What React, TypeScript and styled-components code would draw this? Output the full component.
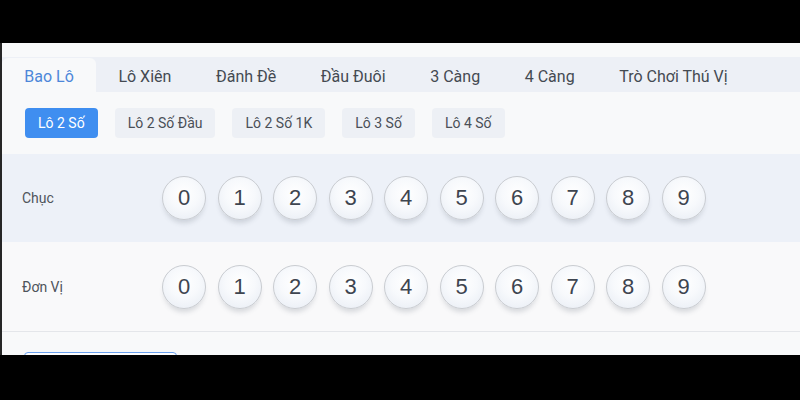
import React, { useState } from "react";
import styled, { createGlobalStyle } from "styled-components";

const GlobalStyle = createGlobalStyle`
  html, body {
    margin: 0;
    background: #000;
  }
  body {
    font-family: Roboto, "Noto Sans", Arial, sans-serif;
  }
`;

const Frame = styled.div`
  width: 800px;
  height: 400px;
  padding-top: 43px;
  box-sizing: border-box;
  background: #000;
`;

const Panel = styled.div`
  height: 312px;
  background: #f8f9fa;
  border-left: 2px solid #262626;
  padding-top: 14px;
  box-sizing: border-box;
  overflow: hidden;
`;

const TabBar = styled.div`
  display: flex;
  height: 35px;
  background: #edf0f6;
`;

const Tab = styled.div<{ $active?: boolean }>`
  display: flex;
  align-items: center;
  padding: 2px 22.3px 0;
  font-size: 16px;
  color: ${(p) => (p.$active ? "#4d87d9" : "#444a52")};
  background: ${(p) => (p.$active ? "#f8f9fa" : "transparent")};
  border-radius: 6px 6px 0 0;
  margin-top: 1px;
  cursor: pointer;
`;

const SubRow = styled.div`
  display: flex;
  gap: 17px;
  padding: 16px 0 16px 23px;
`;

const SubButton = styled.div<{ $active?: boolean }>`
  height: 30px;
  display: flex;
  align-items: center;
  padding: 0 13px;
  border-radius: 4px;
  font-size: 14px;
  color: ${(p) => (p.$active ? "#fff" : "#4a4f57")};
  background: ${(p) => (p.$active ? "#3f8ef0" : "#edf0f5")};
  cursor: pointer;
`;

const PickRow = styled.div<{ $shaded?: boolean }>`
  display: flex;
  align-items: center;
  height: ${(p) => (p.$shaded ? "88px" : "89px")};
  padding-left: 20px;
  background: ${(p) => (p.$shaded ? "#edf1f8" : "#f9f9fa")};
  border-bottom: ${(p) => (p.$shaded ? "none" : "1px solid #e4e6ea")};
`;

const RowLabel = styled.div`
  width: 140px;
  font-size: 14px;
  color: #4f545b;
`;

const Balls = styled.div`
  display: flex;
  gap: 11.5px;
`;

const Ball = styled.div`
  width: 42px;
  height: 42px;
  border-radius: 50%;
  border: 1px solid #c9ccd1;
  background: radial-gradient(circle at 50% 40%, #ffffff 0%, #f7f9fc 45%, #e6ebf3 100%);
  box-shadow: 0 5px 5px -2px rgba(60, 70, 90, 0.18);
  display: flex;
  align-items: center;
  justify-content: center;
  font-family: "Liberation Sans", Arial, sans-serif;
  font-size: 22px;
  color: #3e4550;
  cursor: pointer;
`;

const Footer = styled.div`
  padding: 20px 0 0 22px;
`;

const OutlineButton = styled.div`
  width: 151px;
  height: 36px;
  border: 1px solid #6aa0ee;
  border-radius: 4px;
  background: #fff;
`;

const tabs = ["Bao Lô", "Lô Xiên", "Đánh Đề", "Đầu Đuôi", "3 Càng", "4 Càng", "Trò Chơi Thú Vị"];
const subTabs = ["Lô 2 Số", "Lô 2 Số Đầu", "Lô 2 Số 1K", "Lô 3 Số", "Lô 4 Số"];
const digits = [0, 1, 2, 3, 4, 5, 6, 7, 8, 9];

const App = () => {
  const [tab, setTab] = useState(0);
  const [sub, setSub] = useState(0);
  return (
    <Frame>
      <GlobalStyle />
      <Panel>
        <TabBar>
          {tabs.map((t, i) => (
            <Tab key={t} $active={i === tab} onClick={() => setTab(i)}>
              {t}
            </Tab>
          ))}
        </TabBar>
        <SubRow>
          {subTabs.map((s, i) => (
            <SubButton key={s} $active={i === sub} onClick={() => setSub(i)}>
              {s}
            </SubButton>
          ))}
        </SubRow>
        <PickRow $shaded>
          <RowLabel>Chục</RowLabel>
          <Balls>
            {digits.map((d) => (
              <Ball key={d}>{d}</Ball>
            ))}
          </Balls>
        </PickRow>
        <PickRow>
          <RowLabel>Đơn Vị</RowLabel>
          <Balls>
            {digits.map((d) => (
              <Ball key={d}>{d}</Ball>
            ))}
          </Balls>
        </PickRow>
        <Footer>
          <OutlineButton />
        </Footer>
      </Panel>
    </Frame>
  );
};

export default App;
